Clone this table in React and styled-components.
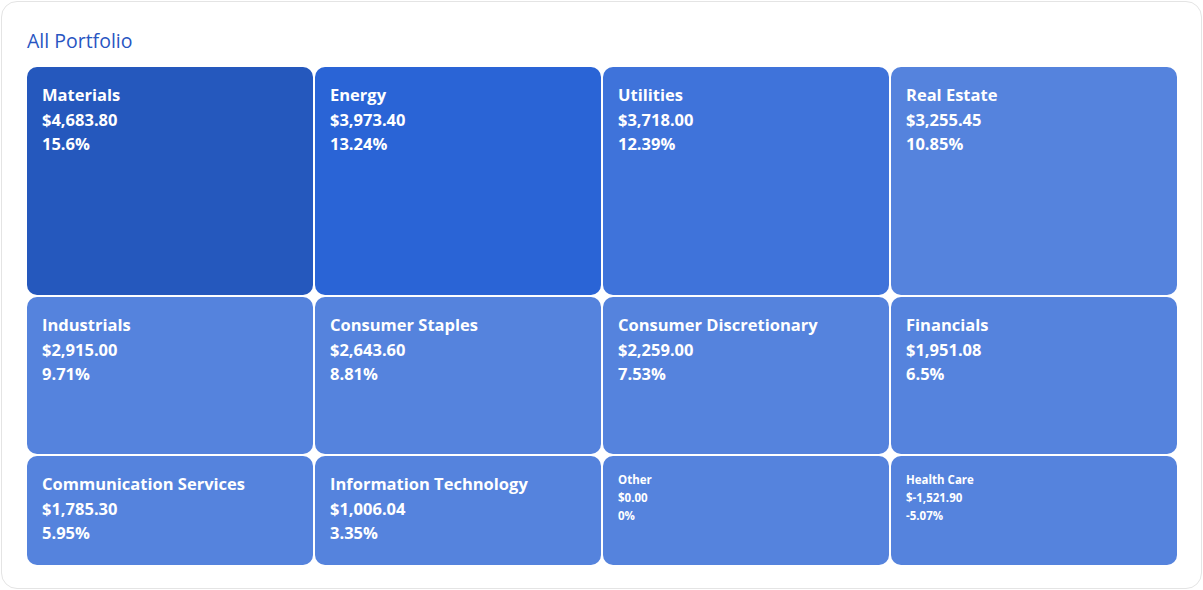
import React from 'react';
import styled, { createGlobalStyle } from 'styled-components';

const GlobalStyle = createGlobalStyle`
  html, body {
    margin: 0;
    padding: 0;
    background: #ffffff;
  }
  body {
    font-family: 'Open Sans', 'Lato', sans-serif;
  }
`;

const Page = styled.div`
  width: 1203px;
  height: 590px;
  padding: 1px;
  box-sizing: border-box;
`;

const Card = styled.div`
  height: 100%;
  box-sizing: border-box;
  border: 1px solid #e4e4e4;
  border-radius: 16px;
  background: #fff;
  padding: 27px 24px 0 25px;
`;

const Title = styled.h2`
  margin: 0 0 14px;
  font-size: 19.5px;
  line-height: 24px;
  font-weight: 400;
  color: #2855c2;
`;

const Treemap = styled.div`
  display: grid;
  grid-template-columns: repeat(4, 286px);
  grid-template-rows: 228px 157px 109px;
  gap: 2px;
`;

const shades = {
  deep: '#2558bd',
  strong: '#2a64d6',
  mid: '#3f73da',
  light: '#5583dd',
};

const Tile = styled.div`
  background: ${({ $shade }) => shades[$shade]};
  border-radius: 10px;
  color: #fff;
  padding: ${({ $small }) => ($small ? '15px 15px' : '16px 15px')};
  box-sizing: border-box;
  overflow: hidden;
`;

const Line = styled.div`
  font-weight: 700;
  font-size: ${({ $small }) => ($small ? '11.5px' : '16.5px')};
  line-height: ${({ $small }) => ($small ? '18px' : '24.5px')};
  white-space: nowrap;
`;

const sectors = [
  { name: 'Materials', value: '$4,683.80', pct: '15.6%', shade: 'deep' },
  { name: 'Energy', value: '$3,973.40', pct: '13.24%', shade: 'strong' },
  { name: 'Utilities', value: '$3,718.00', pct: '12.39%', shade: 'mid' },
  { name: 'Real Estate', value: '$3,255.45', pct: '10.85%', shade: 'light' },
  { name: 'Industrials', value: '$2,915.00', pct: '9.71%', shade: 'light' },
  { name: 'Consumer Staples', value: '$2,643.60', pct: '8.81%', shade: 'light' },
  { name: 'Consumer Discretionary', value: '$2,259.00', pct: '7.53%', shade: 'light' },
  { name: 'Financials', value: '$1,951.08', pct: '6.5%', shade: 'light' },
  { name: 'Communication Services', value: '$1,785.30', pct: '5.95%', shade: 'light' },
  { name: 'Information Technology', value: '$1,006.04', pct: '3.35%', shade: 'light' },
  { name: 'Other', value: '$0.00', pct: '0%', shade: 'light', small: true },
  { name: 'Health Care', value: '$-1,521.90', pct: '-5.07%', shade: 'light', small: true },
];

const App = () => {
  return (
    <>
      <GlobalStyle />
      <Page>
        <Card>
          <Title>All Portfolio</Title>
          <Treemap>
            {sectors.map(s => (
              <Tile key={s.name} $shade={s.shade} $small={s.small}>
                <Line $small={s.small}>{s.name}</Line>
                <Line $small={s.small}>{s.value}</Line>
                <Line $small={s.small}>{s.pct}</Line>
              </Tile>
            ))}
          </Treemap>
        </Card>
      </Page>
    </>
  );
};

export default App;
